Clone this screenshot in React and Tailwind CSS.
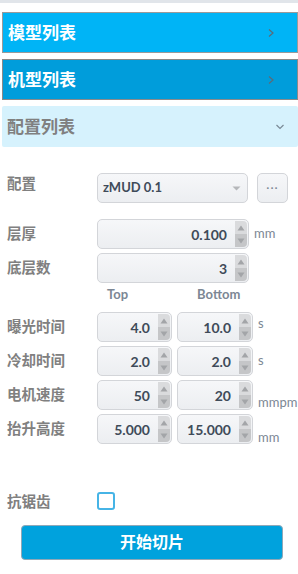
import React from "react";

const FONT = { fontFamily: 'Lato, "Noto Sans CJK SC", sans-serif' };

function Spin() {
  return (
    <div className="flex flex-col w-[12px] self-stretch my-[1px] mr-[1px] rounded-r-[4px] overflow-hidden">
      <div className="flex-1 bg-[#dadbdd] flex items-center justify-center">
        <svg width="8" height="6" viewBox="0 0 8 6"><path d="M4 0.5L7.5 5.5H0.5Z" fill="#a3a5a8" /></svg>
      </div>
      <div className="flex-1 bg-[#c5c6c8] flex items-center justify-center">
        <svg width="8" height="6" viewBox="0 0 8 6"><path d="M4 5.5L7.5 0.5H0.5Z" fill="#a3a5a8" /></svg>
      </div>
    </div>
  );
}

function Num({ value, w }) {
  return (
    <div className={`${w} h-[30px] flex items-stretch rounded-[5px] border border-[#d3d5d9] bg-gradient-to-b from-[#f6f7f9] to-[#eceef1]`}>
      <div className="flex-1 flex items-center justify-end pr-[8px] text-[14px] font-bold text-[#3f4b59]">{value}</div>
      <Spin />
    </div>
  );
}

function Bar({ title, bg, text, border, chevron }) {
  return (
    <div className={`ml-[2px] h-[41px] flex items-center justify-between ${bg} ${border} ${text}`}>
      <span className="pl-[5px] text-[17px] font-bold">{title}</span>
      {chevron === "right" ? (
        <svg className="mr-[22px]" width="8" height="10" viewBox="0 0 8 10"><path d="M2 1.5L6 5L2 8.5" fill="none" stroke="#5b6b78" strokeWidth="1.2" /></svg>
      ) : (
        <svg className="mr-[13px]" width="10" height="8" viewBox="0 0 10 8"><path d="M1.5 2L5 5.5L8.5 2" fill="none" stroke="#7a8a96" strokeWidth="1.2" /></svg>
      )}
    </div>
  );
}

function Label({ children }) {
  return <div className="w-[97px] pl-[7px] text-[14.5px] font-bold text-[#808080]">{children}</div>;
}

function Unit({ children }) {
  return <span className="ml-[5px] text-[13px] text-[#7c8794]">{children}</span>;
}

function Row2({ label, a, b, unit, unitPos }) {
  return (
    <div className="flex items-center h-[30px]">
      <Label>{label}</Label>
      <Num value={a} w="w-[75px]" />
      <div className="w-[5px]" />
      <Num value={b} w="w-[76px]" />
      <span className={`ml-[5px] text-[13px] text-[#7c8794] ${unitPos}`}>{unit}</span>
    </div>
  );
}

export default function App() {
  return (
    <div className="w-[298px] h-[574px] bg-white overflow-hidden" style={FONT}>
      <div className="h-[3px] bg-[#e1e5ea]" />
      <div className="mt-[9px] flex flex-col gap-[6px]">
        <Bar title="模型列表" bg="bg-[#00b4f6]" text="text-white" border="border border-[#9a9a9a]" chevron="right" />
        <Bar title="机型列表" bg="bg-[#009ddb]" text="text-white" border="border border-[#8a8a8a]" chevron="right" />
        <Bar title="配置列表" bg="bg-[#d6f2fd]" text="text-[#808080]" border="rounded-[2px]" chevron="down" />
      </div>

      <div className="mt-[26px] flex items-center h-[30px]">
        <div className="w-[97px] pl-[7px] text-[14.5px] font-bold text-[#808080] -mt-[8px]">配置</div>
        <div className="w-[151px] h-[30px] flex items-center justify-between rounded-[5px] border border-[#d3d5d9] bg-gradient-to-b from-[#f6f7f9] to-[#eceef1]">
          <span className="pl-[5px] text-[13px] font-bold text-[#3f4b59]">zMUD 0.1</span>
          <svg className="mr-[6px]" width="9" height="5" viewBox="0 0 9 5"><path d="M0.5 0.5H8.5L4.5 4.5Z" fill="#b5b7ba" /></svg>
        </div>
        <div className="ml-[9px] w-[31px] h-[30px] flex items-center justify-center rounded-[5px] border border-[#d3d5d9] bg-gradient-to-b from-[#f6f7f9] to-[#eceef1] text-[#7c8794] text-[12px] tracking-[1px]">···</div>
      </div>

      <div className="mt-[16px] flex items-center h-[30px]">
        <Label>层厚</Label>
        <Num value="0.100" w="w-[152px]" />
        <Unit>mm</Unit>
      </div>
      <div className="mt-[4px] flex items-center h-[30px]">
        <Label>底层数</Label>
        <Num value="3" w="w-[152px]" />
      </div>
      <div className="flex h-[23px] items-center text-[13px] font-bold text-[#7c8794]">
        <span className="ml-[107px]">Top</span>
        <span className="ml-[69px]">Bottom</span>
      </div>

      <div className="mt-[6px] flex flex-col gap-[4px]">
        <Row2 label="曝光时间" a="4.0" b="10.0" unit="s" unitPos="self-start mt-[2px]" />
        <Row2 label="冷却时间" a="2.0" b="2.0" unit="s" unitPos="" />
        <Row2 label="电机速度" a="50" b="20" unit="mmpm" unitPos="self-end -mb-[2px]" />
        <Row2 label="抬升高度" a="5.000" b="15.000" unit="mm" unitPos="self-end -mb-[3px]" />
      </div>

      <div className="mt-[48px] flex items-start">
        <div className="w-[97px] pl-[7px] text-[14.5px] font-bold text-[#808080] -mt-[1px]">抗锯齿</div>
        <div className="w-[18px] h-[18px] rounded-[3px] border-2 border-[#46b4e6] bg-white" />
      </div>

      <div className="mt-[12px] ml-[21px] w-[262px] h-[35px] flex items-center justify-center rounded-[4px] bg-[#00a2dd] border border-[#8fa8b8] text-white text-[16px] font-bold">
        开始切片
      </div>
    </div>
  );
}
